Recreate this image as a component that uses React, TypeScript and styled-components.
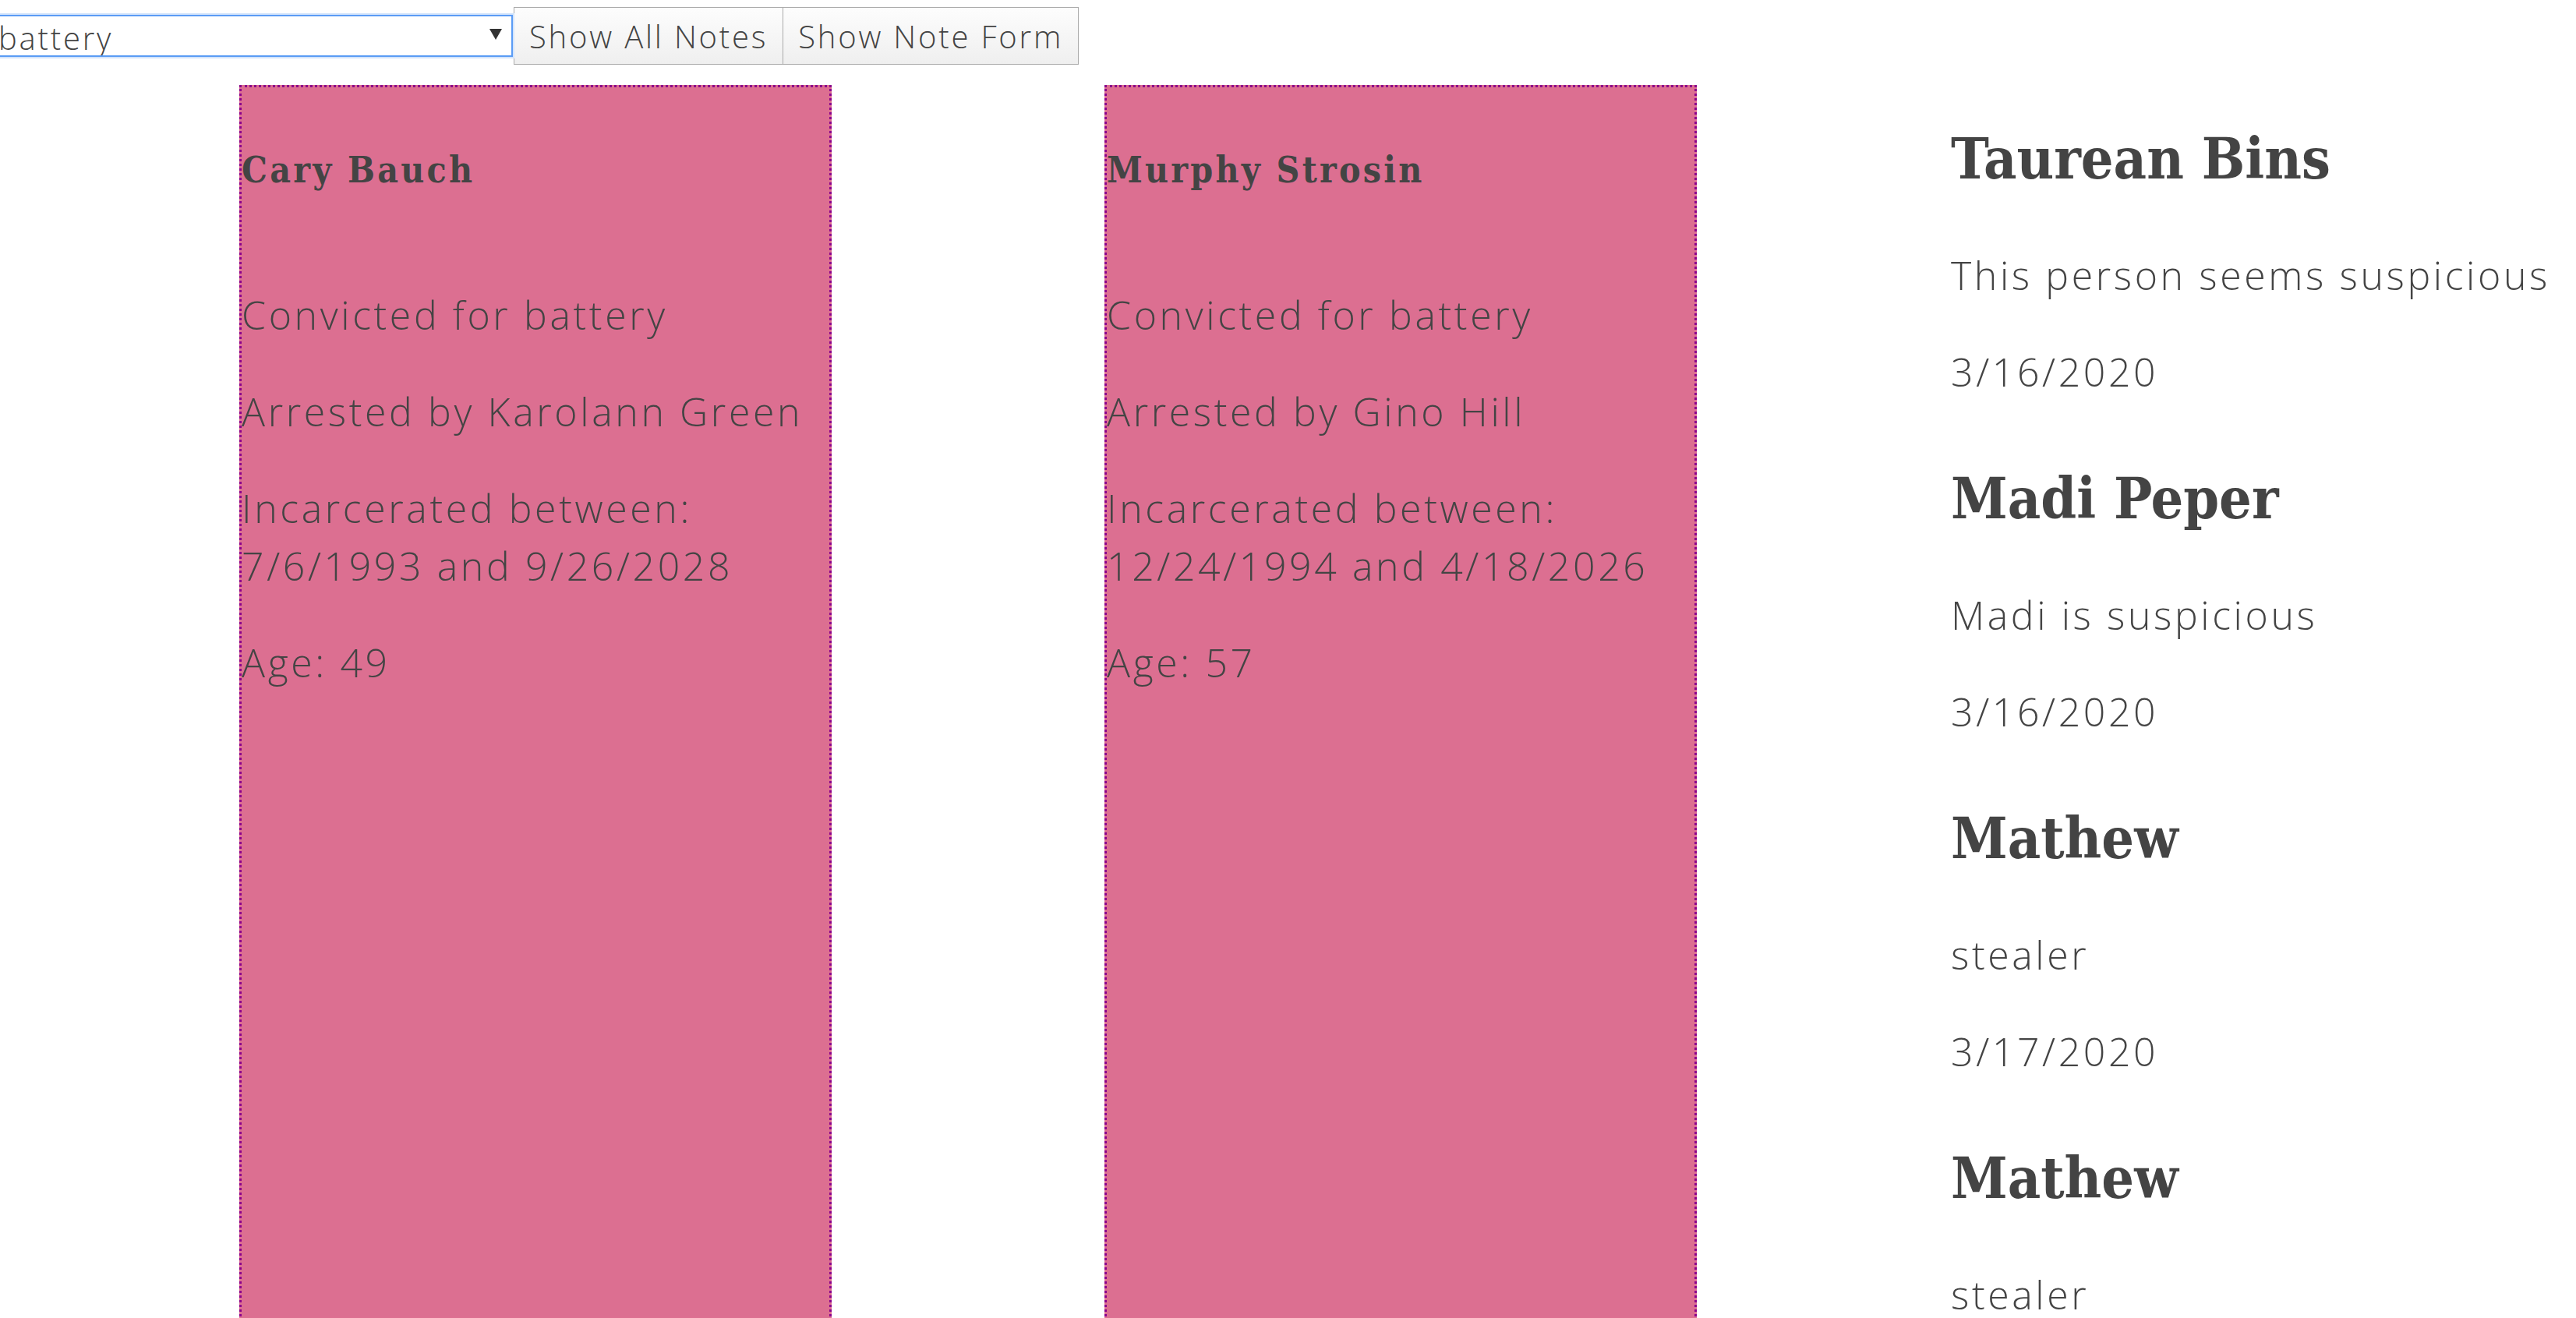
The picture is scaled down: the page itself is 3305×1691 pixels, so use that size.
import React from "react";
import styled, { createGlobalStyle } from "styled-components";

const GlobalStyle = createGlobalStyle`
  body {
    margin: 0;
    background: #ffffff;
    color: #444444;
    font-family: "Open Sans", "Noto Sans", sans-serif;
    font-weight: 300;
    overflow: hidden;
  }
`;

// 상단 도구 모음
const Toolbar = styled.div`
  display: flex;
  flex-direction: row;
  align-items: flex-start;
  height: 84px;
  padding-top: 9px;
  box-sizing: border-box;
`;

const SelectWrap = styled.div`
  position: relative;
  margin-left: -10px;
  margin-top: 10px;
`;

const Select = styled.select`
  appearance: none;
  width: 668px;
  height: 54px;
  box-sizing: border-box;
  border: 2px solid #5b9cf5;
  box-shadow: 0 0 0 2px #d3e4fb;
  border-radius: 0;
  background: #ffffff;
  color: #444444;
  font-family: "Open Sans", sans-serif;
  font-weight: 300;
  font-size: 40px;
  letter-spacing: 2.8px;
  padding: 0 0 0 6px;
  outline: none;
`;

// 드롭다운 화살표
const Arrow = styled.span`
  position: absolute;
  right: 14px;
  top: 18px;
  width: 0;
  height: 0;
  border-left: 8px solid transparent;
  border-right: 8px solid transparent;
  border-top: 14px solid #333333;
  pointer-events: none;
`;

const Button = styled.button<{ $first?: boolean }>`
  height: 74px;
  padding: 0 19px;
  border: 1px solid #aaaaaa;
  margin-left: ${(p) => (p.$first ? "1px" : "-1px")};
  background: linear-gradient(#fdfdfd, #efefef);
  color: #444444;
  font-family: "Open Sans", sans-serif;
  font-weight: 300;
  font-size: 40px;
  letter-spacing: 2.8px;
`;

// 본문: 카드 두 개 + 노트 목록
const Content = styled.div`
  display: flex;
  flex-direction: row;
  align-items: flex-start;
  margin-top: 25px;
  padding-left: 307px;
`;

const Card = styled.div<{ $gap: number }>`
  flex: none;
  width: 760px;
  height: 1700px;
  box-sizing: border-box;
  background: #dc6f91;
  border: 3px dotted #8b008b;
  margin-right: ${(p) => p.$gap}px;
`;

const CardName = styled.h3`
  margin: 78px 0 0;
  font-family: "DejaVu Serif", serif;
  font-stretch: condensed;
  font-weight: 700;
  font-size: 46px;
  line-height: 56px;
  letter-spacing: 3.2px;
`;

const Text = styled.p`
  margin: 0 0 50px;
  font-size: 50px;
  line-height: 74px;
  letter-spacing: 3.6px;
  white-space: nowrap;
`;

const CardBody = styled.div`
  margin-top: 121px;
`;

const Notes = styled.div`
  flex: none;
  white-space: nowrap;
`;

const Note = styled.div`
  &:first-child h1 {
    margin-top: 51px;
  }
`;

const NoteName = styled.h1`
  margin: 82px 0 70px;
  font-family: "DejaVu Serif", serif;
  font-stretch: condensed;
  font-weight: 700;
  font-size: 73px;
  line-height: 86px;
`;

type Inmate = {
  name: string;
  crime: string;
  officer: string;
  from: string;
  to: string;
  age: number;
};

const inmates: Inmate[] = [
  { name: "Cary Bauch", crime: "battery", officer: "Karolann Green", from: "7/6/1993", to: "9/26/2028", age: 49 },
  { name: "Murphy Strosin", crime: "battery", officer: "Gino Hill", from: "12/24/1994", to: "4/18/2026", age: 57 },
];

const notes = [
  { name: "Taurean Bins", text: "This person seems suspicious", date: "3/16/2020" },
  { name: "Madi Peper", text: "Madi is suspicious", date: "3/16/2020" },
  { name: "Mathew", text: "stealer", date: "3/17/2020" },
  { name: "Mathew", text: "stealer", date: "3/17/2020" },
];

const App = () => {
  return (
    <>
      <GlobalStyle />
      <Toolbar>
        <SelectWrap>
          <Select defaultValue="battery">
            <option value="battery">battery</option>
          </Select>
          <Arrow />
        </SelectWrap>
        <Button $first>Show All Notes</Button>
        <Button>Show Note Form</Button>
      </Toolbar>
      <Content>
        {inmates.map((c, i) => (
          <Card key={c.name} $gap={i === 0 ? 350 : 326}>
            <CardName>{c.name}</CardName>
            <CardBody>
              <Text>Convicted for {c.crime}</Text>
              <Text>Arrested by {c.officer}</Text>
              <Text>
                Incarcerated between:
                <br />
                {c.from} and {c.to}
              </Text>
              <Text>Age: {c.age}</Text>
            </CardBody>
          </Card>
        ))}
        <Notes>
          {notes.map((n, i) => (
            <Note key={i}>
              <NoteName>{n.name}</NoteName>
              <Text>{n.text}</Text>
              <Text>{n.date}</Text>
            </Note>
          ))}
        </Notes>
      </Content>
    </>
  );
};

export default App;
